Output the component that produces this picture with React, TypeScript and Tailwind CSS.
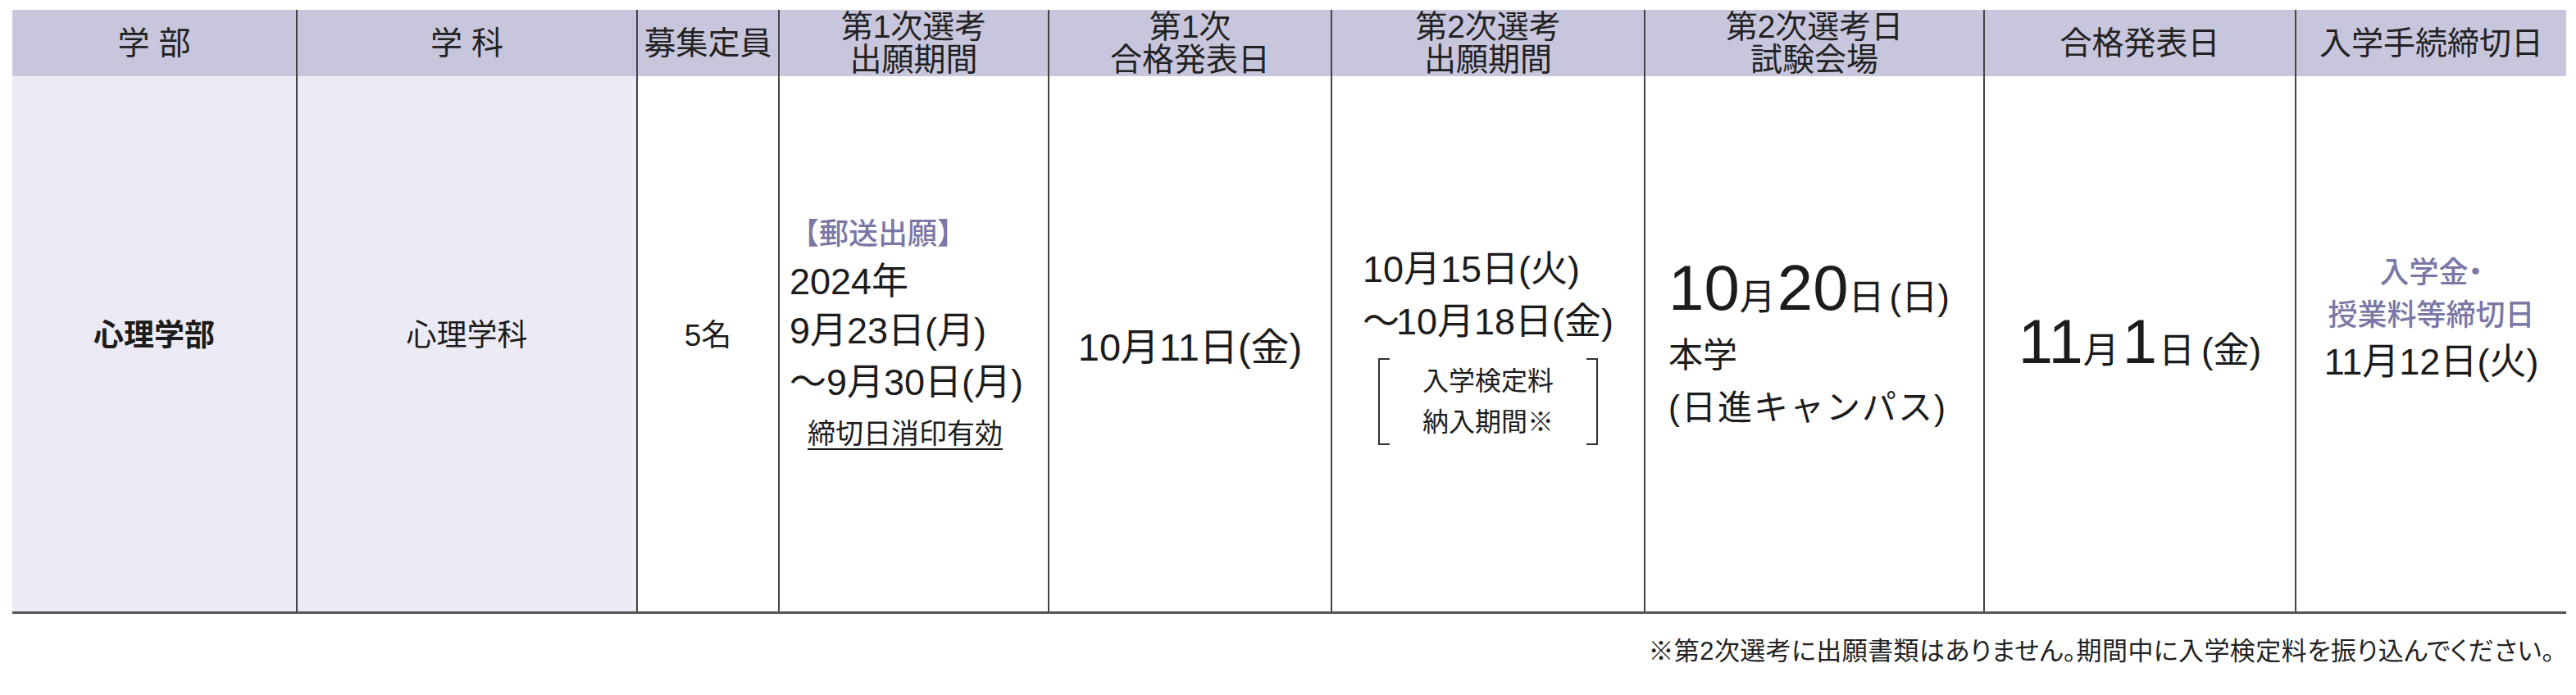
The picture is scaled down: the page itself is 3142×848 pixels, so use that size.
const font = { fontFamily: '"Liberation Sans", "Noto Sans CJK JP", sans-serif' }

const headers = [
  ['学 部'],
  ['学 科'],
  ['募集定員'],
  ['第1次選考', '出願期間'],
  ['第1次', '合格発表日'],
  ['第2次選考', '出願期間'],
  ['第2次選考日', '試験会場'],
  ['合格発表日'],
  ['入学手続締切日'],
]

const cols = 'grid grid-cols-[346px_415px_173px_329px_345px_382px_414px_380px_331px]'

function Bracket({ side }: { side: 'left' | 'right' }) {
  return (
    <div
      className={
        side === 'left'
          ? 'w-[14px] self-stretch border-y-2 border-l-2 border-[#333]'
          : 'w-[14px] self-stretch border-y-2 border-r-2 border-[#333]'
      }
    />
  )
}

export default function App() {
  return (
    <div className="w-[3142px] h-[848px] bg-white pt-[12px] pl-[15px] text-[#1c1c1c]" style={font}>
      <div className="w-[3115px]">
        {/* header */}
        <div className={cols + ' h-[81px] bg-[#c8c6dc]'}>
          {headers.map((lines, i) => (
            <div
              key={i}
              className={
                'flex flex-col items-center justify-center text-[39px] leading-[40px] text-[#222] ' +
                (i > 0 ? 'border-l-2 border-[#444]' : '')
              }
            >
              {lines.map(l => (
                <span key={l} className="whitespace-pre">{l}</span>
              ))}
            </div>
          ))}
        </div>

        {/* body */}
        <div className={cols + ' h-[656px] border-b-[3px] border-[#555]'}>
          <div className="flex items-center justify-center bg-[#ecebf5] text-[37px] font-bold pb-[20px]">心理学部</div>
          <div className="flex items-center justify-center bg-[#ecebf5] border-l-2 border-[#444] text-[37px] pb-[20px]">心理学科</div>
          <div className="flex items-center justify-center border-l-2 border-[#444] text-[37px] pb-[20px]">5名</div>

          <div className="flex flex-col justify-center border-l-2 border-[#444] pl-[12px] pb-[24px]">
            <span className="text-[36px] leading-[58px] font-medium text-[#7b77a6]">【郵送出願】</span>
            <span className="text-[45px] leading-[58px]">2024年</span>
            <span className="text-[45px] leading-[62px]">9月23日(月)</span>
            <span className="text-[45px] leading-[64px]">～9月30日(月)</span>
            <span className="text-[34px] leading-[60px] pl-[22px] underline underline-offset-[6px] decoration-2">締切日消印有効</span>
          </div>

          <div className="flex items-center justify-center border-l-2 border-[#444] text-[47px] pt-[10px]">
            10月11日(金)
          </div>

          <div className="flex flex-col items-center justify-center border-l-2 border-[#444]">
            <div className="flex flex-col">
              <span className="text-[45px] leading-[64px]">10月15日(火)</span>
              <span className="text-[45px] leading-[64px]">
                <span className="-mr-[4px]">～</span>10月18日(金)
              </span>
              <div className="flex mt-[12px] h-[106px] w-[268px] self-center">
                <Bracket side="left" />
                <div className="flex-1 flex flex-col items-center justify-center text-[32px] leading-[50px]">
                  <span>入学検定料</span>
                  <span>納入期間※</span>
                </div>
                <Bracket side="right" />
              </div>
            </div>
          </div>

          <div className="flex flex-col justify-center border-l-2 border-[#444] pl-[28px] pt-[2px]">
            <div className="flex items-baseline leading-[80px]">
              <span className="text-[78px]">10</span>
              <span className="text-[44px]">月</span>
              <span className="text-[78px] ml-[2px]">20</span>
              <span className="text-[44px]">日</span>
              <span className="text-[44px] ml-[6px]">(日)</span>
            </div>
            <span className="text-[42px] leading-[62px]">本学</span>
            <span className="text-[42px] leading-[66px] tracking-[2px]">(日進キャンパス)</span>
          </div>

          <div className="flex items-center justify-center border-l-2 border-[#444] pb-[6px]">
            <div className="flex items-baseline">
              <span className="text-[76px]">11</span>
              <span className="text-[44px]">月</span>
              <span className="text-[76px] ml-[4px]">1</span>
              <span className="text-[44px] ml-[2px]">日</span>
              <span className="text-[44px] ml-[8px]">(金)</span>
            </div>
          </div>

          <div className="flex flex-col items-center justify-center border-l-2 border-[#444] pb-[60px]">
            <span className="text-[36px] leading-[52px] font-medium text-[#7b77a6] [font-feature-settings:'palt']">入学金・</span>
            <span className="text-[36px] leading-[52px] font-medium text-[#7b77a6]">授業料等締切日</span>
            <span className="text-[45px] leading-[62px]">11月12日(火)</span>
          </div>
        </div>

        {/* note */}
        <div className="flex justify-end pr-[14px] mt-[28px] text-[31px] leading-[36px] tracking-[0.4px] text-[#222] [font-feature-settings:'palt']">
          ※第2次選考に出願書類はありません。期間中に入学検定料を振り込んでください。
        </div>
      </div>
    </div>
  )
}
